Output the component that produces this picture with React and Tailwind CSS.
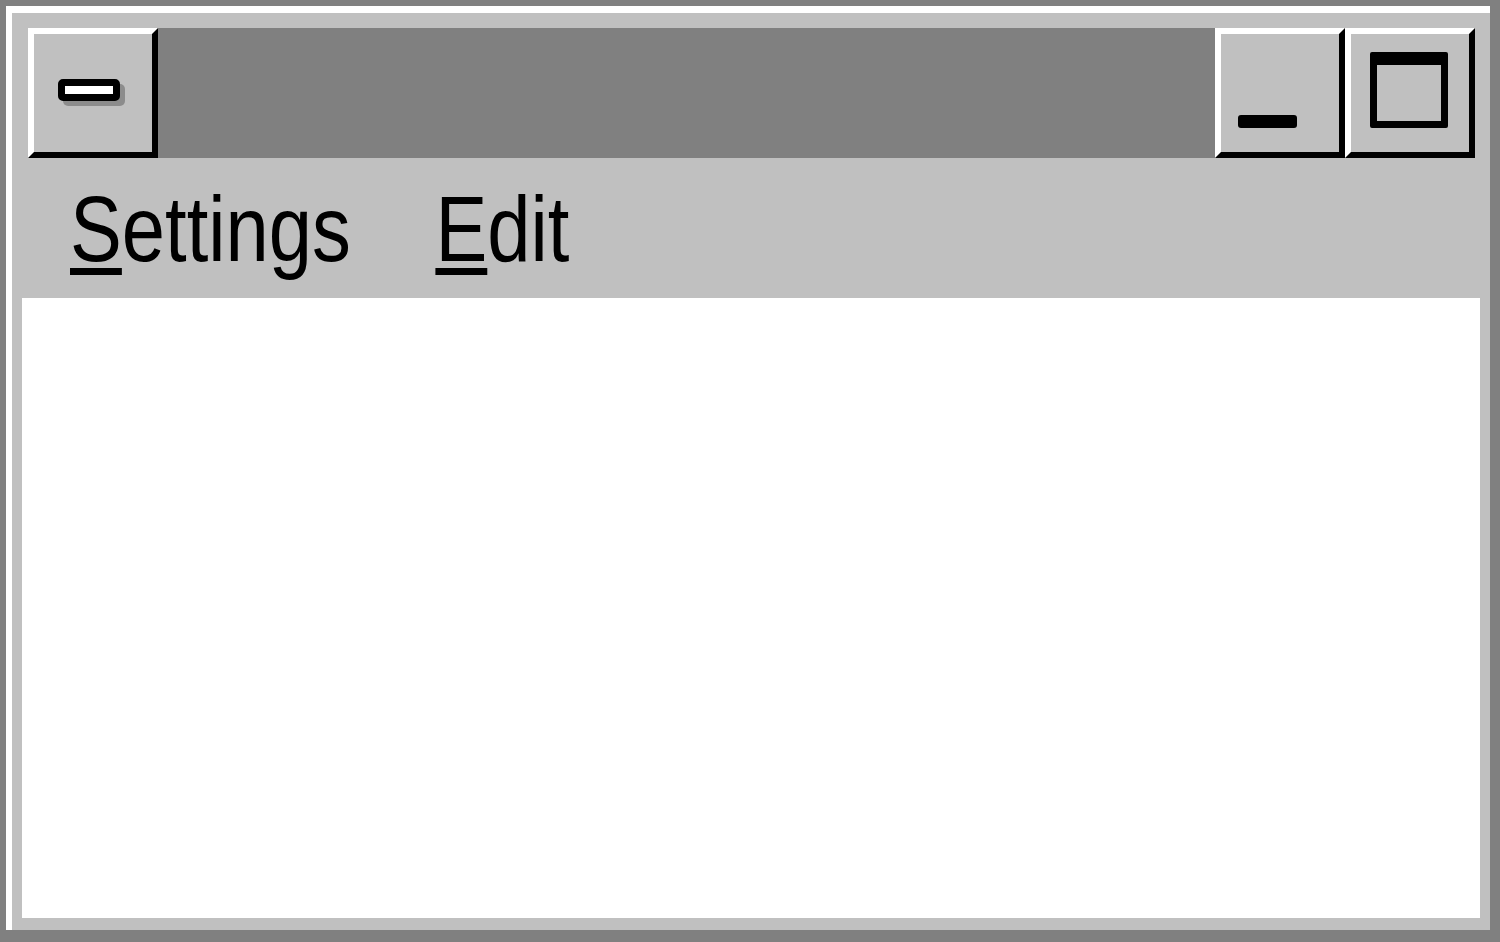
export default function App() {
  const font = { fontFamily: '"Liberation Sans", Arial, sans-serif' };

  return (
    <div className="w-[1500px] h-[942px] bg-[#808080] pt-[6px] pl-[6px] pr-[10px] pb-[12px] overflow-hidden">
      <div className="h-full flex flex-col bg-[#c0c0c0] border-t-[7px] border-l-[6px] border-white">
        {/* title row */}
        <div className="flex h-[130px] mt-[15px] ml-[16px] mr-[15px] shrink-0">
          <button className="w-[130px] h-[130px] shrink-0 bg-[#c0c0c0] border-t-[6px] border-l-[6px] border-b-[6px] border-r-[6px] border-t-white border-l-white border-b-black border-r-black pl-[24px] pt-[45px] flex items-start">
            <span className="block w-[62px] h-[22px] rounded-[5px] border-[7px] border-black bg-white shadow-[5px_5px_0_#8c8c8c]"></span>
          </button>
          <div className="flex-1 bg-[#808080]"></div>
          <button className="w-[130px] h-[130px] shrink-0 bg-[#c0c0c0] border-t-[6px] border-l-[6px] border-b-[6px] border-r-[6px] border-t-white border-l-white border-b-black border-r-black pl-[17px] pt-[81px] flex items-start">
            <span className="block w-[59px] h-[13px] rounded-[3px] bg-black"></span>
          </button>
          <button className="w-[130px] h-[130px] shrink-0 bg-[#c0c0c0] border-t-[6px] border-l-[6px] border-b-[6px] border-r-[6px] border-t-white border-l-white border-b-black border-r-black pl-[19px] pt-[18px] flex items-start">
            <span className="block w-[78px] h-[76px] rounded-[2px] border-[7px] border-t-[13px] border-black bg-[#c0c0c0]"></span>
          </button>
        </div>

        {/* menu bar */}
        <div className="h-[140px] shrink-0 pl-[58px] pt-[25px]">
          <div className="flex gap-[100px] origin-left scale-x-[0.845] text-[92px] leading-none text-black" style={font}>
            <span>
              <span className="underline decoration-[7px] underline-offset-[7px]">S</span>ettings
            </span>
            <span>
              <span className="underline decoration-[7px] underline-offset-[7px]">E</span>dit
            </span>
          </div>
        </div>

        {/* client area */}
        <div className="flex-1 bg-white ml-[10px] mr-[10px] mb-[12px]"></div>
      </div>
    </div>
  );
}
